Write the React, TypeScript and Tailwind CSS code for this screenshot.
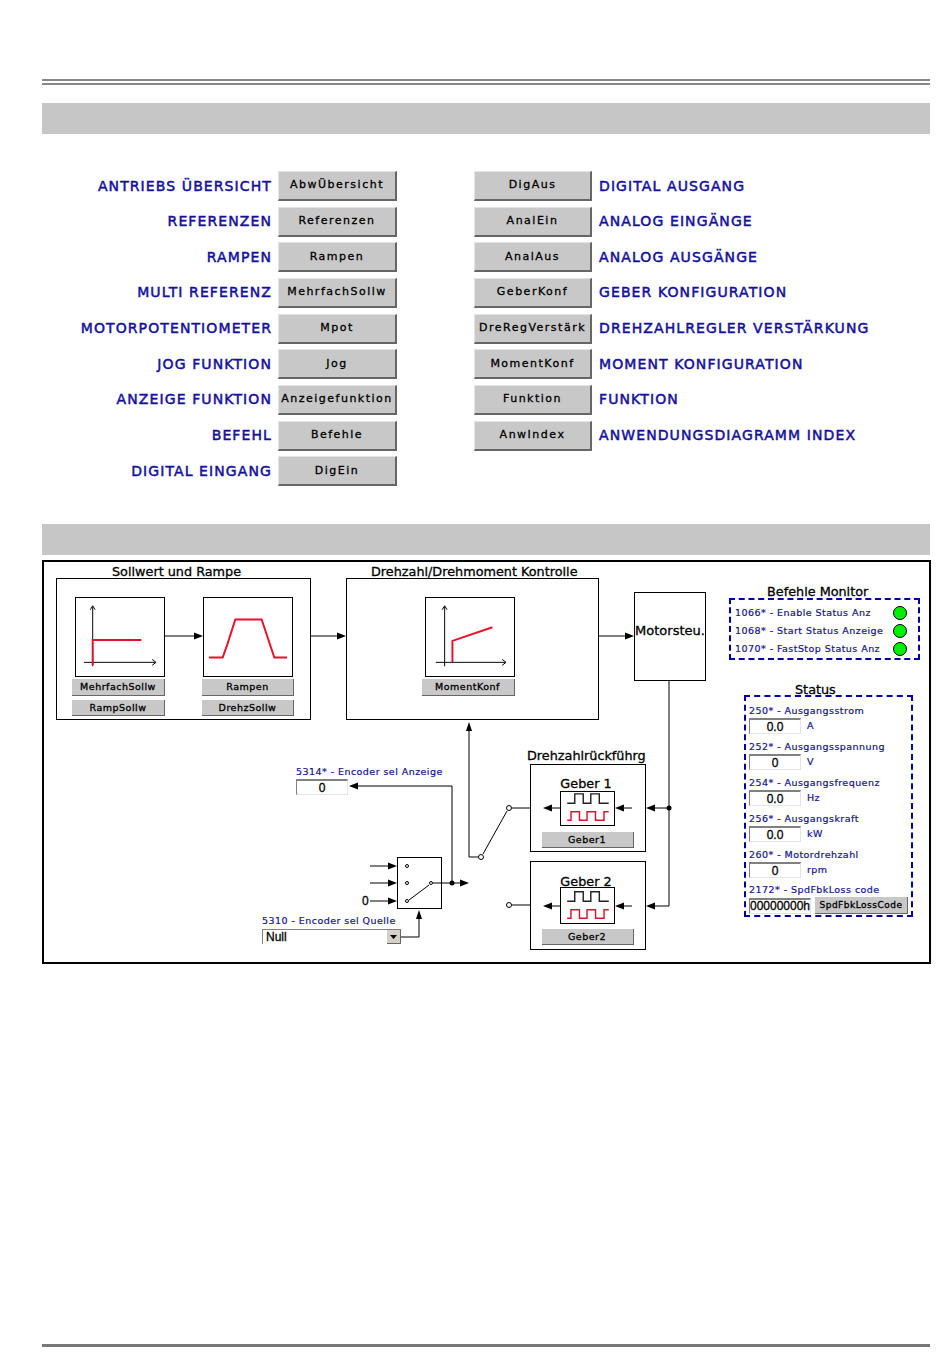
import React from 'react'

const LEFT_ROWS = [
  ['ANTRIEBS ÜBERSICHT', 'AbwÜbersicht'],
  ['REFERENZEN', 'Referenzen'],
  ['RAMPEN', 'Rampen'],
  ['MULTI REFERENZ', 'MehrfachSollw'],
  ['MOTORPOTENTIOMETER', 'Mpot'],
  ['JOG FUNKTION', 'Jog'],
  ['ANZEIGE FUNKTION', 'Anzeigefunktion'],
  ['BEFEHL', 'Befehle'],
  ['DIGITAL EINGANG', 'DigEin'],
]

const RIGHT_ROWS = [
  ['DigAus', 'DIGITAL AUSGANG'],
  ['AnalEin', 'ANALOG EINGÄNGE'],
  ['AnalAus', 'ANALOG AUSGÄNGE'],
  ['GeberKonf', 'GEBER KONFIGURATION'],
  ['DreRegVerstärk', 'DREHZAHLREGLER VERSTÄRKUNG'],
  ['MomentKonf', 'MOMENT KONFIGURATION'],
  ['Funktion', 'FUNKTION'],
  ['AnwIndex', 'ANWENDUNGSDIAGRAMM INDEX'],
]

const MONITOR = ['1066* - Enable Status Anz', '1068* - Start Status Anzeige', '1070* - FastStop Status Anz']

const STATUS = [
  ['250* - Ausgangsstrom', '0.0', 'A'],
  ['252* - Ausgangsspannung', '0', 'V'],
  ['254* - Ausgangsfrequenz', '0.0', 'Hz'],
  ['256* - Ausgangskraft', '0.0', 'kW'],
  ['260* - Motordrehzahl', '0', 'rpm'],
]

const DEJAVU = "font-['DejaVu_Sans',sans-serif]"
const BIG_LABEL = `text-[14px] tracking-[1.1px] [-webkit-text-stroke:0.5px] text-[#14109c] whitespace-nowrap ${DEJAVU}`

function BigButton({ children, className = 'w-[119px]' }: { children: string; className?: string }) {
  return (
    <div className={`${className} h-[30px] flex items-center justify-center bg-[#c8c8c8] border-t border-l border-t-[#e4e4e4] border-l-[#e4e4e4] border-r-2 border-b-2 border-r-[#666666] border-b-[#666666] text-[11px] tracking-[1.5px] [-webkit-text-stroke:0.3px] text-black whitespace-nowrap ${DEJAVU}`}>
      {children}
    </div>
  )
}

function SmallButton({ children, className = 'w-[93px] h-[17px]' }: { children: string; className?: string }) {
  return (
    <div className={`${className} flex items-center justify-center bg-[#c8c8c8] border-r border-b border-r-[#666666] border-b-[#666666] text-[9.5px] tracking-[0.5px] [-webkit-text-stroke:0.3px] text-black whitespace-nowrap shrink-0 ${DEJAVU}`}>
      {children}
    </div>
  )
}

function Field({ children, className = 'w-[52px]' }: { children: string; className?: string }) {
  return (
    <div className={`${className} h-[16px] flex items-center justify-center bg-white border-t-2 border-l border-t-[#808080] border-l-[#808080] border-r border-b border-r-[#e4e4e4] border-b-[#e4e4e4] text-[12px] [-webkit-text-stroke:0.3px] font-['Liberation_Sans',sans-serif] text-black shrink-0`}>
      {children}
    </div>
  )
}

function Chart({ children }: { children: React.ReactNode }) {
  return (
    <svg width="90" height="80" viewBox="0 0 90 80" className="block border border-black bg-white shrink-0" fill="none">
      {children}
    </svg>
  )
}

function Axes({ x, y }: { x: number; y: number }) {
  return (
    <g stroke="#000" strokeWidth="1">
      <path d={`M${x} 9V70`} />
      <path d={`M${x - 2.5} 12L${x} 8L${x + 2.5} 12`} />
      <path d={`M${x - 9} ${y}H81`} />
      <path d={`M78 ${y - 3}L82 ${y}L78 ${y + 3}`} />
    </g>
  )
}

function Head({ x, y, dir }: { x: number; y: number; dir: 'l' | 'r' | 'u' }) {
  // x, y is the tip of the arrow
  const pts =
    dir === 'r' ? `${x},${y} ${x - 9},${y - 3.5} ${x - 9},${y + 3.5}`
    : dir === 'l' ? `${x},${y} ${x + 9},${y - 3.5} ${x + 9},${y + 3.5}`
    : `${x},${y} ${x - 3},${y + 9} ${x + 3},${y + 9}`
  return <polygon points={pts} fill="#000" />
}

function Wires() {
  return (
    <svg width="885" height="400" viewBox="44 562 885 400" className="absolute inset-0 pointer-events-none" fill="none">
      <g stroke="#000" strokeWidth="1">
        <path d="M165 636H195M311 636H338M599 636H626" />
        <path d="M669 681V906H655M669 808H655" />
        <path d="M632 808H622M560 808H552M632 906H622M560 906H552" />
        <path d="M469 730V857H478" />
        <path d="M483 854L507 811" />
        <path d="M512 808H530M512 905H530" />
        <path d="M370 866H390M370 883H390M370 901H390" />
        <path d="M409 900L429 885" />
        <path d="M433 883H460" />
        <path d="M452 883V786H358" />
        <path d="M401 937H419V918" />
      </g>
      <g stroke="#000" strokeWidth="1" fill="#fff">
        <circle cx="481" cy="857" r="2.5" />
        <circle cx="509" cy="808" r="2.5" />
        <circle cx="509" cy="905" r="2.5" />
        <circle cx="407" cy="866" r="1.5" />
        <circle cx="407" cy="883" r="1.5" />
        <circle cx="407" cy="901" r="1.5" />
        <circle cx="431" cy="883" r="1.5" />
      </g>
      <circle cx="452" cy="883" r="2.5" fill="#000" />
      <circle cx="669" cy="808" r="2.5" fill="#000" />
      <Head x={203} y={636} dir="r" />
      <Head x={346} y={636} dir="r" />
      <Head x={634} y={636} dir="r" />
      <Head x={469} y={722} dir="u" />
      <Head x={419} y={910} dir="u" />
      <Head x={349} y={786} dir="l" />
      <Head x={469} y={883} dir="r" />
      <Head x={397} y={866} dir="r" />
      <Head x={397} y={883} dir="r" />
      <Head x={397} y={901} dir="r" />
      <Head x={646} y={808} dir="l" />
      <Head x={646} y={906} dir="l" />
      <Head x={615} y={808} dir="l" />
      <Head x={615} y={906} dir="l" />
      <Head x={543} y={808} dir="l" />
      <Head x={543} y={906} dir="l" />
    </svg>
  )
}

function WaveBox({ height, dy = 0 }: { height: number; dy?: number }) {
  // coordinates are local to a 55 wide box
  return (
    <svg width="55" height={height} viewBox={`0 0 55 ${height}`} className="block border border-black bg-white shrink-0" fill="none">
      <g transform={`translate(0 ${dy})`}>
        <path d="M6 12H14V2H23V12H31V2H40V12H50" stroke="#222" strokeWidth="1.5" />
        <path d="M6 30H10V21H19V30H27V21H36V30H45V21H50" stroke="#e0102a" strokeWidth="1.5" />
      </g>
    </svg>
  )
}

function Diagram() {
  const title = `absolute whitespace-nowrap text-[12.8px] leading-[14px] [-webkit-text-stroke:0.3px] text-black ${DEJAVU}`
  const blue = `whitespace-nowrap text-[9.5px] leading-[14px] tracking-[0.45px] [-webkit-text-stroke:0.2px] text-[#14148c] ${DEJAVU}`
  return (
    <div className="relative w-[889px] h-[404px] border-2 border-black bg-white shrink-0">
      <div className={`${title} left-[68px] top-[3px]`}>Sollwert und Rampe</div>
      <div className="absolute left-[12px] top-[16px] w-[255px] h-[142px] border border-black flex gap-[37px] pl-[15px] pt-[18px]">
        <div className="flex flex-col items-end">
          <Chart>
            <Axes x={17} y={66} />
            <path d="M17 69V43H67" stroke="#e8102a" strokeWidth="2" />
          </Chart>
          <div className="mt-[2px]"><SmallButton>MehrfachSollw</SmallButton></div>
          <div className="mt-[4px]"><SmallButton className="w-[93px] h-[16px]">RampSollw</SmallButton></div>
        </div>
        <div className="flex flex-col items-end w-[92px]">
          <div className="mr-[1px]">
            <Chart>
              <path d="M5 61H19L24 47L32 22H59L72 61H85" stroke="#e8102a" strokeWidth="2" />
            </Chart>
          </div>
          <div className="mt-[2px]"><SmallButton className="w-[92px] h-[17px]">Rampen</SmallButton></div>
          <div className="mt-[4px]"><SmallButton className="w-[92px] h-[16px]">DrehzSollw</SmallButton></div>
        </div>
      </div>

      <div className={`${title} left-[327px] top-[3px]`}>Drehzahl/Drehmoment Kontrolle</div>
      <div className="absolute left-[302px] top-[16px] w-[253px] h-[142px] border border-black flex flex-col items-center pt-[18px] pr-[9px]">
        <div className="flex flex-col items-end">
          <Chart>
            <Axes x={19} y={66} />
            <path d="M27 66V44L68 30" stroke="#e8102a" strokeWidth="2" />
          </Chart>
          <div className="mt-[2px]"><SmallButton>MomentKonf</SmallButton></div>
        </div>
      </div>

      <div className={`absolute left-[590px] top-[30px] w-[72px] h-[89px] border border-black flex items-center justify-center pb-[12px] text-[13px] [-webkit-text-stroke:0.3px] text-black whitespace-nowrap ${DEJAVU}`}>
        Motorsteu.
      </div>

      <div className={`${title} left-[723px] top-[23px]`}>Befehle Monitor</div>
      <div className="absolute left-[685px] top-[36px] w-[191px] h-[62px] border-2 border-dashed border-[#0000a0] pl-[4px] pr-[11px] pt-[4px]">
        {MONITOR.map(text => (
          <div key={text} className="h-[18px] flex items-center justify-between">
            <span className={blue}>{text}</span>
            <span className="w-[14px] h-[14px] rounded-full bg-[#00f000] border border-black shrink-0" />
          </div>
        ))}
      </div>

      <div className={`${title} left-[751px] top-[121px]`}>Status</div>
      <div className="absolute left-[700px] top-[133px] w-[169px] h-[222px] border-2 border-dashed border-[#0000a0] pl-[3px] pt-[7px] flex flex-col gap-[6px]">
        {STATUS.map(([label, value, unit]) => (
          <div key={label} className="flex flex-col">
            <div className={`${blue} h-[14px]`}>{label}</div>
            <div className="flex items-center gap-[6px]">
              <Field>{value}</Field>
              <span className={blue}>{unit}</span>
            </div>
          </div>
        ))}
        <div className="flex flex-col -mt-[1px]">
          <div className={`${blue} h-[14px]`}>2172* - SpdFbkLoss code</div>
          <div className="flex items-center gap-[4px]">
            <Field className="w-[62px]">00000000h</Field>
            <SmallButton className="w-[93px] h-[17px] !text-[9px]">SpdFbkLossCode</SmallButton>
          </div>
        </div>
      </div>

      <div className={`${title} left-[483px] top-[187px]`}>Drehzahlrückführg</div>
      <div className="absolute left-[486px] top-[202px] w-[116px] h-[88px] border border-black flex flex-col items-center pr-[1px]">
        <div className={`${title} !static mt-[12px] pr-[3px]`}>Geber 1</div>
        <div><WaveBox height={35} /></div>
        <div className="mt-[6px]"><SmallButton className="w-[92px] h-[16px]">Geber1</SmallButton></div>
      </div>
      <div className="absolute left-[486px] top-[299px] w-[116px] h-[89px] border border-black flex flex-col items-center pr-[1px]">
        <div className={`${title} !static mt-[13px] pr-[3px]`}>Geber 2</div>
        <div className="-mt-[2px]"><WaveBox height={37} dy={2} /></div>
        <div className="mt-[5px]"><SmallButton className="w-[92px] h-[16px]">Geber2</SmallButton></div>
      </div>

      <div className={`${blue} absolute left-[252px] top-[203px]`}>5314* - Encoder sel Anzeige</div>
      <div className="absolute left-[252px] top-[217px]"><Field>0</Field></div>

      <div className="absolute left-[353px] top-[295px] w-[45px] h-[52px] border border-black" />
      <div className="absolute left-[318px] top-[332px] text-[12px] leading-[14px] [-webkit-text-stroke:0.3px] font-['Liberation_Sans',sans-serif] text-black">0</div>

      <div className={`${blue} absolute left-[218px] top-[352px]`}>5310 - Encoder sel Quelle</div>
      <div className="absolute left-[218px] top-[367px] w-[139px] h-[15px] flex items-center justify-between bg-white border-t border-l border-[#808080] pl-[3px] text-[12px] [-webkit-text-stroke:0.3px] font-['Liberation_Sans',sans-serif] text-black">
        Null
        <span className="w-[14px] h-[14px] bg-[#d4d0c8] flex items-center justify-center border-r border-b border-[#666666]">
          <svg width="7" height="4" viewBox="0 0 7 4"><path d="M0 0H7L3.5 4Z" fill="#000" /></svg>
        </span>
      </div>

      <Wires />
    </div>
  )
}

export default function App() {
  return (
    <div className="h-[1369px] w-[950px] bg-white flex flex-col pl-[42px] pt-[79px] pb-[22px]">
      <div className="w-[888px] h-[2px] bg-[#888888]" />
      <div className="w-[888px] h-[2px] bg-[#888888] mt-[2px]" />
      <div className="w-[888px] h-[31px] bg-[#c6c6c6] mt-[18px]" />

      <div className="flex mt-[37px] w-[888px]">
        <div className="w-[355px] flex flex-col gap-[5.67px] shrink-0">
          {LEFT_ROWS.map(([label, btn]) => (
            <div key={btn} className="h-[30px] flex items-center justify-end gap-[6px]">
              <span className={BIG_LABEL}>{label}</span>
              <BigButton>{btn}</BigButton>
            </div>
          ))}
        </div>
        <div className="ml-[77px] flex flex-col gap-[5.67px]">
          {RIGHT_ROWS.map(([btn, label]) => (
            <div key={btn} className="h-[30px] flex items-center gap-[7px]">
              <BigButton className="w-[118px]">{btn}</BigButton>
              <span className={BIG_LABEL}>{label}</span>
            </div>
          ))}
        </div>
      </div>

      <div className="w-[888px] h-[31px] bg-[#c6c6c6] mt-[38px]" />
      <div className="mt-[5px]"><Diagram /></div>

      <div className="w-[888px] h-[3px] bg-[#777777] mt-auto" />
    </div>
  )
}
